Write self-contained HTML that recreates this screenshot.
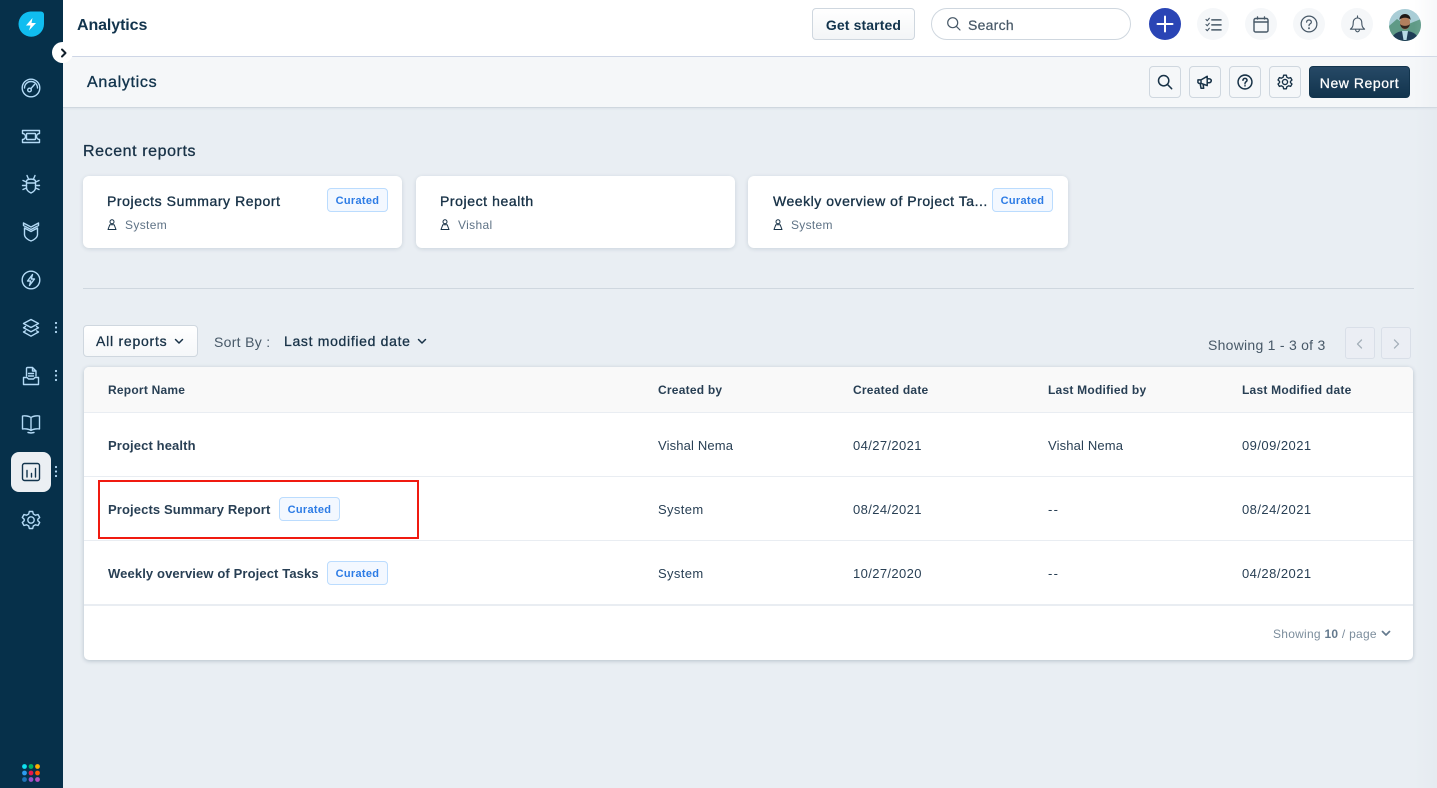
<!DOCTYPE html>
<html lang="en"><head><meta charset="utf-8"><title>Analytics</title>
<style>
*{box-sizing:border-box}
html,body{margin:0;padding:0}
body{width:1437px;height:788px;overflow:hidden;position:relative;background:#e9eef3;font-family:"Liberation Sans",sans-serif;color:#12344d}
.a{position:absolute;white-space:nowrap}
.t{position:absolute;white-space:nowrap;line-height:16px}
.b{font-weight:700}
svg{position:absolute;display:block;fill:none}
.nav{stroke:#b3daf6;stroke-width:1.4;stroke-linecap:round;stroke-linejoin:round}
.ic{stroke:#183247;stroke-width:1.7;stroke-linecap:round;stroke-linejoin:round}
.tb{position:absolute;top:8px;width:32px;height:32px;border-radius:50%;background:#f5f7f9}
.tool{position:absolute;top:66px;width:32px;height:32px;border:1px solid #cfd7df;border-radius:4px;background:#f5f7f9}
.card{position:absolute;top:176px;height:72px;background:#fff;border-radius:6px;box-shadow:0 1px 4px rgba(18,52,77,.14)}
.pill{position:absolute;height:24px;width:61px;background:#f3f8ff;border:1px solid #bbdcfe;border-radius:4px;color:#2c7be5;font-size:11px;font-weight:700;line-height:24px;text-align:center;letter-spacing:.3px}
.row{position:absolute;left:84px;width:1329px;height:1px;background:#e9edf2}
.cell{position:absolute;white-space:nowrap;font-size:13px;line-height:16px;color:#283f54;letter-spacing:.38px}
.hd{font-weight:700;font-size:12px;letter-spacing:.23px;color:#283f54}
.nm{font-weight:700;letter-spacing:.12px;color:#283f54}
.u{letter-spacing:.15px}
</style></head><body>

<!-- sidebar -->
<div class="a" style="left:0;top:0;width:63px;height:788px;background:#06304a"></div>
<svg style="left:18px;top:11px" width="27" height="26" viewBox="0 0 27 26"><path d="M12.500 .5H23a3 3 0 0 1 3 3V13A12.500 12.500 0 0 1 .5 13 12.500 12.500 0 0 1 12.500 .5Z" fill="#10bdf0"/><path d="M14.500 7 8 14.500H12.500L11 19.500 18 12H13.500Z" fill="#fff"/></svg>

<!-- nav icons -->
<svg class="nav" style="left:21px;top:78px" width="20" height="20" viewBox="0 0 20 20"><circle cx="10" cy="10" r="8.800"/><path d="M3.500 10A6.500 6.500 0 0 1 16.500 10"/><circle cx="8.500" cy="12" r="1.800"/><path d="M10 10.500l3.500-4"/></svg>
<svg class="nav" style="left:21px;top:129px" width="20" height="15" viewBox="0 0 20 15"><path d="M1.500 1.500H18.500V4.500A3 3 0 0 0 18.500 10.500V13.500H1.500V10.500A3 3 0 0 0 1.500 4.500Z"/><rect x="5.500" y="4.500" width="9" height="6" rx=".6"/></svg>
<svg class="nav" style="left:21px;top:174px" width="20" height="20" viewBox="0 0 20 20"><path d="M6 1.500 7.500 5M14 1.500 12.500 5M5.500 7C6.500 4.500 13.500 4.500 14.500 7V14C14.500 16 12 18 10 19 8 18 5.500 16 5.500 14Z"/><path d="M5.500 8 2 6.500M5.500 11.500H1.500M5.500 14 2 15.500M14.500 8 18 6.500M14.500 11.500H18.500M14.500 14 18 15.500M5.500 9H14.500"/></svg>
<svg class="nav" style="left:22px;top:222px" width="18" height="20" viewBox="0 0 18 20"><path d="M1.500 1 9 5 16.500 1V3.500L9 7.500 1.500 3.500ZM2.500 6 9 9.500 15.500 6V12.500C15.500 15.500 12 18 9 19 6 18 2.500 15.500 2.500 12.500Z"/></svg>
<svg class="nav" style="left:21px;top:270px" width="20" height="20" viewBox="0 0 20 20"><circle cx="10" cy="10" r="8.800"/><path d="M11.500 4.500 6.500 11H9.700L8.500 15.500 13.500 9H10.300Z"/></svg>
<svg class="nav" style="left:22px;top:318px" width="18" height="20" viewBox="0 0 18 20"><path d="M9 1.500 16.500 5.500 9 9.500 1.500 5.500ZM3.500 8.500 1.500 9.800 9 13.800 16.500 9.800 14.500 8.500M3.500 12.800 1.500 14 9 18.200 16.500 14 14.500 12.800"/></svg>
<svg class="nav" style="left:22px;top:366px" width="18" height="20" viewBox="0 0 18 20"><path d="M4.500 10V2.500A1 1 0 0 1 5.500 1.500H10.500L14 5V10M10.500 1.500V5H14M6.500 7.500H11.500M6.500 10H11.500"/><path d="M1.500 11.500H5L6.500 13H11.500L13 11.500H16.500V18.500H1.500Z"/></svg>
<svg class="nav" style="left:21px;top:414px" width="20" height="20" viewBox="0 0 20 20"><path d="M10 3.500C8 2 4 1.500 1.500 2V15C4 14.500 8 15 10 16.500 12 15 16 14.500 18.500 15V2C16 1.500 12 2 10 3.500ZM10 3.500V16.500M7 18.500 10 19 13 18.500"/></svg>
<div class="a" style="left:11px;top:452px;width:40px;height:40px;border-radius:8px;background:#ebeff3"></div>
<svg style="left:21px;top:462px;stroke:#12344d;stroke-width:1.400;stroke-linecap:round" width="20" height="20" viewBox="0 0 20 20"><rect x="1.500" y="1.500" width="17" height="17" rx="2"/><path d="M6 8.500V15M10.500 11.500V15M14.500 6.500V15"/></svg>
<svg class="nav" style="left:21px;top:510px" width="20" height="20" viewBox="0 0 20 20"><circle cx="10" cy="10" r="3.200"/><path d="M8.300 1.500H11.700L12.300 4 14.500 5.200 17 4.500 18.700 7.500 16.800 9.300V10.700L18.700 12.500 17 15.500 14.500 14.800 12.300 16 11.700 18.500H8.300L7.700 16 5.500 14.800 3 15.500 1.300 12.500 3.200 10.700V9.300L1.300 7.500 3 4.500 5.500 5.200 7.700 4Z"/></svg>
<svg style="left:54px;top:322px" width="4" height="160" viewBox="0 0 4 160"><g fill="#b3daf6"><circle cx="2" cy="1" r="1.100"/><circle cx="2" cy="5.500" r="1.100"/><circle cx="2" cy="10" r="1.100"/><circle cx="2" cy="49" r="1.100"/><circle cx="2" cy="53.500" r="1.100"/><circle cx="2" cy="58" r="1.100"/><circle cx="2" cy="145" r="1.100"/><circle cx="2" cy="149.500" r="1.100"/><circle cx="2" cy="154" r="1.100"/></g></svg>
<svg style="left:22px;top:764px" width="18" height="18" viewBox="0 0 18 18"><circle cx="2.500" cy="2.500" r="2.400" fill="#0fe0f0"/><circle cx="9" cy="2.500" r="2.400" fill="#00b368"/><circle cx="15.500" cy="2.500" r="2.400" fill="#ffb000"/><circle cx="2.500" cy="9" r="2.400" fill="#2c9cf0"/><circle cx="9" cy="9" r="2.400" fill="#e8174b"/><circle cx="15.500" cy="9" r="2.400" fill="#ff5a00"/><circle cx="2.500" cy="15.500" r="2.400" fill="#1d74b8"/><circle cx="9" cy="15.500" r="2.400" fill="#9a4fc8"/><circle cx="15.500" cy="15.500" r="2.400" fill="#b84fc0"/></svg>

<!-- top bar -->
<div class="a" style="left:63px;top:0;width:1374px;height:57px;background:#fff;border-bottom:1px solid #cfd7e6"></div>
<div class="t b" style="left:77px;top:18px;font-size:16px;letter-spacing:-.1px;color:#12344d">Analytics</div>
<div class="a" style="left:812px;top:8px;width:103px;height:32px;border:1px solid #cfd7df;border-radius:4px;background:linear-gradient(#fff,#f3f5f7);font-weight:700;font-size:14px;line-height:32px;text-align:center;color:#12344d;letter-spacing:.12px">Get started</div>
<div class="a" style="left:931px;top:8px;width:200px;height:32px;border:1px solid #cfd7df;border-radius:16px;background:#fff"></div>
<svg style="left:946px;top:16px;stroke:#475867;stroke-width:1.200;stroke-linecap:round" width="16" height="16" viewBox="0 0 16 16"><circle cx="6.700" cy="6.700" r="5"/><path d="M10.400 10.400 14 14"/></svg>
<div class="t" style="left:968px;top:17px;font-size:14px;color:#475867;-webkit-text-stroke:.2px #475867;letter-spacing:.25px">Search</div>
<div class="a" style="left:1149px;top:8px;width:32px;height:32px;border-radius:50%;background:#2a45b5"></div>
<svg style="left:1149px;top:8px;stroke:#fff;stroke-width:2;stroke-linecap:round" width="32" height="32" viewBox="0 0 32 32"><path d="M16 8.500V23.500M8.500 16H23.500"/></svg>
<div class="tb" style="left:1197px"></div><div class="tb" style="left:1245px"></div><div class="tb" style="left:1293px"></div><div class="tb" style="left:1341px"></div>
<svg style="left:1205px;top:17px;stroke:#475867;stroke-width:1.300;stroke-linecap:round;stroke-linejoin:round" width="17" height="15" viewBox="0 0 20 18"><path d="M1 3 2.500 4.500 5 1.500M1 9 2.500 10.500 5 7.500M1 15 2.500 16.500 5 13.500"/><path d="M8 3.500H19M8 9.500H19M8 15.500H19" stroke-width="1.800"/></svg>
<svg style="left:1253px;top:16px;stroke:#475867;stroke-width:1.400;stroke-linejoin:round;stroke-linecap:round" width="16" height="17" viewBox="0 0 16 17"><rect x="1" y="2.500" width="14" height="13.500" rx="1.500"/><path d="M1 6H15M4.500 1V3M11.500 1V3"/></svg>
<svg style="left:1300px;top:15px;stroke:#475867;stroke-width:1.300;stroke-linecap:round" width="18" height="18" viewBox="0 0 19 19"><circle cx="9.500" cy="9.500" r="8.300"/><path d="M7 7.500C7 4.500 12 4.500 12 7.500 12 9.300 9.500 9.300 9.500 11.200"/><circle cx="9.500" cy="14" r=".4"/></svg>
<svg style="left:1349px;top:15px;stroke:#475867;stroke-width:1.200;stroke-linejoin:round;stroke-linecap:round" width="17" height="18" viewBox="0 0 17 19"><path d="M8.500 1V2.500M4 8C4 1.500 13 1.500 13 8 13 12 14 13.500 16 15H1C3 13.500 4 12 4 8ZM6.500 15.500C6.500 18.500 10.500 18.500 10.500 15.500"/></svg>
<svg style="left:1389px;top:9px" width="32" height="32" viewBox="0 0 32 32"><defs><clipPath id="c"><circle cx="16" cy="16" r="16"/></clipPath></defs><g clip-path="url(#c)"><rect width="32" height="32" fill="#a9cdd6"/><path d="M0 17 8 10 17 16 32 10V32H0Z" fill="#5f9a86"/><path d="M2 32C3 25 9 22 16 22S29 25 30 32Z" fill="#1f3d55"/><path d="M13 22H19L17.500 31H14.500Z" fill="#b8dbe6"/><ellipse cx="16" cy="13.500" rx="5" ry="7" fill="#b27f5e"/><path d="M10.500 11C10 3 22 3 21.500 11 20 8 12 8 10.500 11Z" fill="#1d1816"/><path d="M11 15C12 21.500 20 21.500 21 15 19 17.500 13 17.500 11 15Z" fill="#33251f"/></g></svg>

<!-- page header -->
<div class="a" style="left:63px;top:57px;width:1374px;height:51px;background:#f5f7f9;border-bottom:1px solid #cfd7df;box-shadow:0 1px 2px rgba(18,52,77,.06)"></div>
<div class="t" style="left:87px;top:75px;font-size:16px;-webkit-text-stroke:.35px #12344d;letter-spacing:.7px;color:#12344d">Analytics</div>
<div class="tool" style="left:1149px"></div><div class="tool" style="left:1189px"></div><div class="tool" style="left:1229px"></div><div class="tool" style="left:1269px"></div>
<svg class="ic" style="left:1157px;top:74px" width="16" height="16" viewBox="0 0 18 18"><circle cx="7.500" cy="7.500" r="5.800"/><path d="M11.800 11.800 16.500 16.500"/></svg>
<svg class="ic" style="left:1197px;top:75px" width="16" height="15" viewBox="0 0 18 17"><path d="M1 5.500H4.500L11.500 1.500V12L4.500 9.500H2L1 8.500ZM4.500 5.500V9.500M3.500 9.500 4.500 15H7.500L6.800 10.300M11.500 4.500C15.500 3.500 17 6 15.500 8 14.500 9 13 9 11.500 8.500"/></svg>
<svg class="ic" style="left:1237px;top:74px" width="16" height="16" viewBox="0 0 18 18"><circle cx="9" cy="9" r="7.800"/><path d="M6.700 7C6.700 4.300 11.300 4.300 11.300 7 11.300 8.700 9 8.700 9 10.500"/><circle cx="9" cy="13" r=".3"/></svg>
<svg class="ic" style="left:1277px;top:74px" width="16" height="16" viewBox="0 0 20 20"><circle cx="10" cy="10" r="3.200"/><path d="M8.300 1.500H11.700L12.300 4 14.500 5.200 17 4.500 18.700 7.500 16.800 9.300V10.700L18.700 12.500 17 15.500 14.500 14.800 12.300 16 11.700 18.500H8.300L7.700 16 5.500 14.800 3 15.500 1.300 12.500 3.200 10.700V9.300L1.300 7.500 3 4.500 5.500 5.200 7.700 4Z"/></svg>
<div class="a" style="left:1309px;top:66px;width:101px;height:32px;border:1px solid #12344d;border-radius:4px;background:linear-gradient(#264966,#12344d);color:#fff;font-size:14px;-webkit-text-stroke:.25px #fff;line-height:32px;text-align:center;letter-spacing:.55px">New Report</div>

<!-- recent reports -->
<div class="t" style="left:83px;top:144px;font-size:16px;-webkit-text-stroke:.3px #183247;letter-spacing:.58px;color:#183247">Recent reports</div>
<div class="card" style="left:83px;width:319px"></div><div class="card" style="left:416px;width:319px"></div><div class="card" style="left:748px;width:320px"></div>
<div class="t" style="left:107px;top:193px;font-size:14px;-webkit-text-stroke:.35px #183247;letter-spacing:.58px;color:#183247">Projects Summary Report</div>
<div class="pill" style="left:327px;top:188px">Curated</div>
<div class="t" style="left:125px;top:217px;font-size:12px;color:#5f7386;letter-spacing:.35px">System</div>
<div class="t" style="left:440px;top:193px;font-size:14px;-webkit-text-stroke:.35px #183247;letter-spacing:.58px;color:#183247">Project health</div>
<div class="t" style="left:458px;top:217px;font-size:12px;color:#5f7386;letter-spacing:.35px">Vishal</div>
<div class="t" style="left:773px;top:193px;font-size:14px;-webkit-text-stroke:.35px #183247;letter-spacing:.53px;color:#183247;width:215px;overflow:hidden">Weekly overview of Project Ta...</div>
<div class="pill" style="left:992px;top:188px">Curated</div>
<div class="t" style="left:791px;top:217px;font-size:12px;color:#5f7386;letter-spacing:.3px">System</div>
<svg style="left:107px;top:219px;stroke:#183247;stroke-width:1" width="10" height="12" viewBox="0 0 10 12"><circle cx="5" cy="2.800" r="2"/><path d="M1 10.500 2.800 5.800H7.200L9 10.500Z" stroke-linejoin="round"/></svg>
<svg style="left:440px;top:219px;stroke:#183247;stroke-width:1" width="10" height="12" viewBox="0 0 10 12"><circle cx="5" cy="2.800" r="2"/><path d="M1 10.500 2.800 5.800H7.200L9 10.500Z" stroke-linejoin="round"/></svg>
<svg style="left:773px;top:219px;stroke:#183247;stroke-width:1" width="10" height="12" viewBox="0 0 10 12"><circle cx="5" cy="2.800" r="2"/><path d="M1 10.500 2.800 5.800H7.200L9 10.500Z" stroke-linejoin="round"/></svg>
<div class="a" style="left:83px;top:288px;width:1331px;height:1px;background:#cfd7df"></div>

<!-- filters -->
<div class="a" style="left:83px;top:325px;width:115px;height:32px;border:1px solid #cfd7df;border-radius:4px;background:linear-gradient(#fff,#f5f7f9)"></div>
<div class="t" style="left:96px;top:333px;font-size:14px;-webkit-text-stroke:.3px #183247;letter-spacing:.76px;color:#183247">All reports</div>
<svg style="left:174px;top:338px;stroke:#183247;stroke-width:1.500;stroke-linecap:round;stroke-linejoin:round" width="10" height="7" viewBox="0 0 10 7"><path d="M1.500 1.500 5 5 8.500 1.500"/></svg>
<div class="t" style="left:214px;top:334px;font-size:14px;color:#475867;letter-spacing:.3px">Sort By :</div>
<div class="t" style="left:284px;top:333px;font-size:14px;-webkit-text-stroke:.3px #183247;letter-spacing:.68px;color:#183247">Last modified date</div>
<svg style="left:417px;top:338px;stroke:#183247;stroke-width:1.500;stroke-linecap:round;stroke-linejoin:round" width="10" height="7" viewBox="0 0 10 7"><path d="M1.500 1.500 5 5 8.500 1.500"/></svg>
<div class="t" style="left:1208px;top:337px;font-size:14px;color:#475867;letter-spacing:.26px">Showing 1 - 3 of 3</div>
<div class="a" style="left:1345px;top:327px;width:30px;height:32px;border:1px solid #d9dfe8;border-radius:3px;background:#ebeef4"></div>
<div class="a" style="left:1381px;top:327px;width:30px;height:32px;border:1px solid #d9dfe8;border-radius:3px;background:#ebeef4"></div>
<svg style="left:1356px;top:339px;stroke:#a5b0ba;stroke-width:1.300;stroke-linecap:round;stroke-linejoin:round" width="8" height="10" viewBox="0 0 8 10"><path d="M5.500 1 1.500 5 5.500 9"/></svg>
<svg style="left:1392px;top:339px;stroke:#a5b0ba;stroke-width:1.300;stroke-linecap:round;stroke-linejoin:round" width="8" height="10" viewBox="0 0 8 10"><path d="M2.500 1 6.500 5 2.500 9"/></svg>

<!-- table -->
<div class="a" style="left:84px;top:367px;width:1329px;height:293px;background:#fff;border-radius:5px;box-shadow:0 1px 4px rgba(18,52,77,.24)"></div>
<div class="a" style="left:84px;top:367px;width:1329px;height:45px;background:#f9f9f9;border-radius:5px 5px 0 0"></div>
<div class="row" style="top:412px"></div><div class="row" style="top:476px"></div><div class="row" style="top:540px"></div><div class="row" style="top:604px;height:2px"></div>
<div class="cell hd" style="left:108px;top:382px">Report Name</div>
<div class="cell hd" style="left:658px;top:382px">Created by</div>
<div class="cell hd" style="left:853px;top:382px">Created date</div>
<div class="cell hd" style="left:1048px;top:382px">Last Modified by</div>
<div class="cell hd" style="left:1242px;top:382px">Last Modified date</div>

<div class="cell nm" style="left:108px;top:438px">Project health</div>
<div class="cell u" style="left:658px;top:438px">Vishal Nema</div>
<div class="cell" style="left:853px;top:438px">04/27/2021</div>
<div class="cell u" style="left:1048px;top:438px">Vishal Nema</div>
<div class="cell" style="left:1242px;top:438px;letter-spacing:.45px">09/09/2021</div>

<div class="cell nm" style="left:108px;top:502px">Projects Summary Report</div>
<div class="pill" style="left:279px;top:497px">Curated</div>
<div class="cell" style="left:658px;top:502px">System</div>
<div class="cell" style="left:853px;top:502px">08/24/2021</div>
<div class="cell" style="left:1048px;top:502px;letter-spacing:1.300px">--</div>
<div class="cell" style="left:1242px;top:502px;letter-spacing:.45px">08/24/2021</div>

<div class="cell nm" style="left:108px;top:566px">Weekly overview of Project Tasks</div>
<div class="pill" style="left:327px;top:561px">Curated</div>
<div class="cell" style="left:658px;top:566px">System</div>
<div class="cell" style="left:853px;top:566px">10/27/2020</div>
<div class="cell" style="left:1048px;top:566px;letter-spacing:1.300px">--</div>
<div class="cell" style="left:1242px;top:566px;letter-spacing:.45px">04/28/2021</div>

<div class="t" style="left:1273px;top:626px;font-size:12px;color:#7c8d9c;letter-spacing:.26px">Showing <b style="color:#647a8e">10</b> / page</div>
<svg style="left:1381px;top:630px;stroke:#647a8e;stroke-width:1.700;stroke-linecap:round;stroke-linejoin:round" width="10" height="7" viewBox="0 0 10 7"><path d="M1.500 1.500 5 5 8.500 1.500"/></svg>

<!-- collapse button -->
<div class="a" style="left:52px;top:42px;width:21px;height:21px;border-radius:50%;background:#fff"></div>
<svg style="left:60px;top:48px;stroke:#12202c;stroke-width:2;stroke-linecap:round;stroke-linejoin:round" width="7" height="10" viewBox="0 0 7 10"><path d="M2 1.500 5.500 5 2 8.500"/></svg>

<!-- red highlight -->
<div class="a" style="left:98px;top:480px;width:321px;height:59px;border:2px solid #f01a10"></div>

<!-- right edge shade -->
<div class="a" style="left:1414px;top:0;width:23px;height:788px;background:linear-gradient(90deg,rgba(255,255,255,0),rgba(220,225,232,.25))"></div>
</body></html>
